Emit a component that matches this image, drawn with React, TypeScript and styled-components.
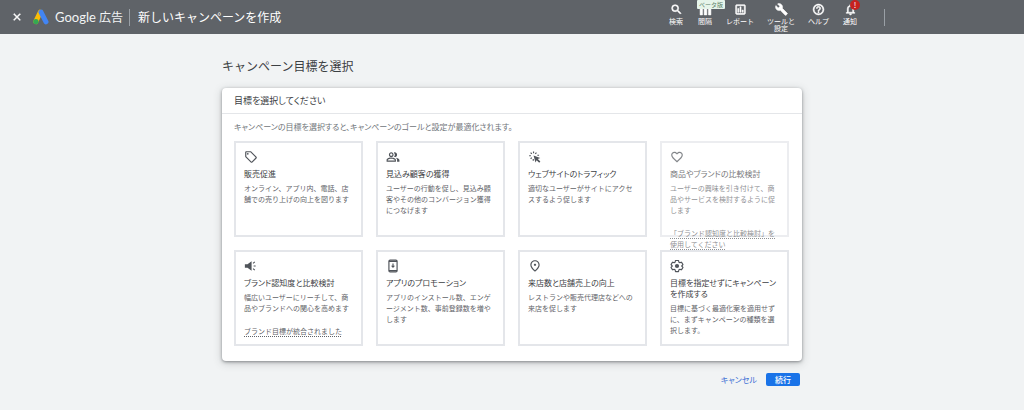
import React from "react";
import styled, { createGlobalStyle } from "styled-components";
import {
  MdBuild,
  MdClose,
  MdFavoriteBorder,
  MdHelpOutline,
  MdNotificationsNone,
  MdOutlineAssessment,
  MdOutlineLocalOffer,
  MdOutlinePeopleAlt,
  MdOutlinePlace,
  MdSearch,
} from "react-icons/md";

const GlobalStyle = createGlobalStyle`
  * { box-sizing: border-box; }
  body {
    margin: 0;
    min-height: 100vh;
    background: #f1f3f4;
    color: #3c4043;
    font-family: "Noto Sans CJK JP", "Noto Sans", sans-serif;
    font-feature-settings: "palt";
  }
  button { font: inherit; font-feature-settings: inherit; color: inherit; background: none; border: 0; padding: 0; cursor: pointer; }
  h1, h2, h3, p, ul { margin: 0; padding: 0; font-weight: 400; }
`;

const Header = styled.header`
  display: flex;
  align-items: center;
  height: 34px;
  padding: 0 139px 0 11px;
  background: #5f6368;
  color: #fff;
`;

const CloseButton = styled.button`
  display: flex;
  font-size: 12px;
  margin-right: 10px;

  svg { stroke: none; }
  path:not([fill="none"]) { stroke: currentColor; stroke-width: 1; }
`;

const Brand = styled.a`
  display: flex;
  align-items: center;
  gap: 6px;
  color: #f1f3f4;
  text-decoration: none;
  font-size: 12px;
  line-height: 18px;
`;

const BrandName = styled.span`
  font-family: Lato, "Noto Sans CJK JP", sans-serif;
  font-feature-settings: normal;

  b { font-size: 13px; font-weight: 400; }
`;

const Divider = styled.span`
  width: 1px;
  height: 17px;
  background: #9aa0a6;
`;

const PageTitle = styled.h1`
  margin-left: 8px;
  font-size: 12px;
  line-height: 18px;
  font-feature-settings: normal;
`;

const Tools = styled.nav`
  display: flex;
  align-self: stretch;
  align-items: flex-start;
  gap: 13px;
  margin: 0 26px 0 auto;
  padding-top: 3px;
`;

const Tool = styled.button`
  position: relative;
  display: flex;
  flex-direction: column;
  align-items: center;
  gap: 2px;
  min-width: 16px;
  font-size: 7px;
  font-feature-settings: normal;
  line-height: 7px;
  white-space: pre;

  svg { width: 13px; height: 13px; stroke: none; }
  path:not([fill="none"]) { stroke: currentColor; stroke-width: 1; }
`;

const BetaBadge = styled.span`
  position: absolute;
  top: -3px;
  left: 0;
  padding: 0 2px;
  border-radius: 1px;
  background: #e6f4ea;
  color: #5b8067;
  font-size: 6px;
  line-height: 9px;
`;

const AlertBadge = styled.span`
  position: absolute;
  top: -3px;
  left: 8px;
  width: 10px;
  border-radius: 5px;
  background: #c5221f;
  font-size: 8px;
  line-height: 10px;
  text-align: center;
`;

const Main = styled.main`
  max-width: 580px;
  margin: 0 auto;
  padding: 23px 0;
`;

const Heading = styled.h2`
  font-size: 12px;
  line-height: 18px;
  font-feature-settings: normal;
`;

const Panel = styled.section`
  margin-top: 13px;
  border-radius: 4px;
  background: #fff;
  box-shadow: 0 1px 3px rgba(60, 64, 67, 0.5), 0 2px 8px rgba(60, 64, 67, 0.25);
`;

const PanelTitle = styled.h3`
  padding: 0 12px;
  border-bottom: 1px solid #e4e6e9;
  font-size: 9px;
  line-height: 25px;
`;

const PanelBody = styled.div`
  padding: 7px 13px 15px 12px;
`;

const Intro = styled.p`
  margin-bottom: 8px;
  color: #70757a;
  font-size: 8px;
  line-height: 12px;
`;

const Goals = styled.ul`
  display: grid;
  grid-template-columns: repeat(4, 1fr);
  gap: 13px;
  list-style: none;
`;

const Goal = styled.li<{ $disabled?: boolean }>`
  height: 96px;
  padding: 7px 8px;
  border: 2px solid #e4e6ea;
  opacity: ${({ $disabled }) => ($disabled ? 0.7 : 1)};
`;

const GoalButton = styled.button`
  display: flex;
  flex-direction: column;
  width: 100%;
  text-align: left;

  svg { width: 14px; height: 14px; color: #50545a; }
  &:disabled { cursor: default; }
`;

const GoalName = styled.span`
  margin: 4px 0;
  color: #3c4043;
  font-size: 8px;
  line-height: 11px;
  white-space: pre;
`;

const GoalText = styled.span`
  color: #5f6368;
  font-size: 7px;
  line-height: 11px;
  white-space: pre;
  font-feature-settings: normal;
`;

const GoalNote = styled.a`
  display: inline-block;
  margin-top: 12px;
  color: #5f6368;
  font-size: 7px;
  line-height: 11px;
  white-space: pre;
  text-decoration: underline dotted 1px;
  text-underline-offset: 2px;
  font-feature-settings: normal;
`;

const Actions = styled.div`
  display: flex;
  justify-content: flex-end;
  gap: 9px;
  margin: 12px 2px 0 0;
  font-size: 8px;
  line-height: 13px;
`;

const CancelButton = styled.button`
  color: #3b6fd4;
`;

const ContinueButton = styled.button`
  width: 34px;
  border-radius: 2px;
  background: #1a73e8;
  color: #fff;
  font-weight: 500;
`;

const AdsLogo = () => (
  <svg width="16" height="16" viewBox="0 0 16 16" aria-hidden="true">
    <path d="M7.2 3.2 2.8 12.6" stroke="#fbbc04" strokeWidth="5" strokeLinecap="round" />
    <path d="M8 3.2 13 12.8" stroke="#4285f4" strokeWidth="5" strokeLinecap="round" />
    <circle cx="2.9" cy="12.6" r="2.7" fill="#34a853" />
  </svg>
);

const GapIcon = () => (
  <svg viewBox="0 0 24 24" fill="currentColor" aria-hidden="true">
    <path d="M2 2h20v20h-4.500V8h-3v14H9.500V8h-3v14H2z" />
  </svg>
);

const ClickIcon = () => (
  <svg viewBox="0 0 24 24" fill="currentColor" aria-hidden="true">
    <path d="M9.500 9.500l11.500 4-4.200 2 4.400 4.400-2 2-4.400-4.400-2 4z" />
    <path
      d="M9.500 2.500v3M4.500 4.500l2 2M14.500 4.500l-2 2M2 9.800H5M4.500 15l2-2M9 18.500v-3M16 9h3"
      fill="none"
      stroke="currentColor"
      strokeWidth="2"
    />
  </svg>
);

const SpeakerIcon = () => (
  <svg viewBox="0 0 24 24" fill="currentColor" aria-hidden="true">
    <path d="M1.500 9h4.500L13 4v16l-7-5H1.500z" />
    <path d="M15.500 7.500L18.500 5M16.500 12H20M15.500 16.500L18.500 19" stroke="currentColor" strokeWidth="2" />
  </svg>
);

const PhoneIcon = () => (
  <svg viewBox="0 0 24 24" fill="none" stroke="currentColor" strokeWidth="2" aria-hidden="true">
    <rect x="5" y="2" width="14" height="20" rx="2" />
    <path d="M5 4h14M5 20h14" />
    <path d="M12 7.500v5" />
    <path d="M8.500 11.500h7L12 15.500z" fill="currentColor" stroke="none" />
  </svg>
);

const GearIcon = () => (
  <svg viewBox="0 0 24 24" fill="none" stroke="currentColor" aria-hidden="true">
    <path
      d="M9.500 2.500h5l.8 2.900 1.600.9 2.900-.8 2.400 4.200-2.100 2.300 2.100 2.300-2.400 4.200-2.900-.8-1.600.9-.8 2.900h-5l-.8-2.900-1.600-.9-2.900.8-2.400-4.200L3.900 12 1.800 9.700l2.400-4.200 2.900.8 1.600-.9z"
      strokeWidth="2"
      strokeLinejoin="round"
    />
    <circle cx="12" cy="12" r="3.600" fill="currentColor" stroke="none" />
  </svg>
);

type GoalItem = {
  icon: React.ReactNode;
  name: string;
  text: string;
  note?: string;
  disabled?: boolean;
};

const goals: GoalItem[] = [
  { icon: <MdOutlineLocalOffer />, name: "販売促進", text: "オンライン、アプリ内、電話、店\n舗での売り上げの向上を図ります" },
  { icon: <MdOutlinePeopleAlt />, name: "見込み顧客の獲得", text: "ユーザーの行動を促し、見込み顧\n客やその他のコンバージョン獲得\nにつなげます" },
  { icon: <ClickIcon />, name: "ウェブサイトのトラフィック", text: "適切なユーザーがサイトにアクセ\nスするよう促します" },
  {
    icon: <MdFavoriteBorder />,
    name: "商品やブランドの比較検討",
    text: "ユーザーの興味を引き付けて、商\n品やサービスを検討するように促\nします",
    note: "「ブランド認知度と比較検討」を\n使用してください",
    disabled: true,
  },
  {
    icon: <SpeakerIcon />,
    name: "ブランド認知度と比較検討",
    text: "幅広いユーザーにリーチして、商\n品やブランドへの関心を高めます",
    note: "ブランド目標が統合されました",
  },
  { icon: <PhoneIcon />, name: "アプリのプロモーション", text: "アプリのインストール数、エンゲ\nージメント数、事前登録数を増や\nします" },
  { icon: <MdOutlinePlace />, name: "来店数と店舗売上の向上", text: "レストランや販売代理店などへの\n来店を促します" },
  { icon: <GearIcon />, name: "目標を指定せずにキャンペーン\nを作成する", text: "目標に基づく最適化案を適用せず\nに、まずキャンペーンの種類を選\n択します。" },
];

export default function App() {
  return (
    <>
      <GlobalStyle />
      <Header>
        <CloseButton aria-label="閉じる"><MdClose /></CloseButton>
        <Brand href="#">
          <AdsLogo />
          <BrandName><b>Google</b> 広告</BrandName>
          <Divider />
        </Brand>
        <PageTitle>新しいキャンペーンを作成</PageTitle>
        <Tools>
          <Tool><MdSearch />検索</Tool>
          <Tool><GapIcon />間隔<BetaBadge>ベータ版</BetaBadge></Tool>
          <Tool><MdOutlineAssessment />レポート</Tool>
          <Tool><MdBuild />{"ツールと\n設定"}</Tool>
          <Tool><MdHelpOutline />ヘルプ</Tool>
          <Tool><MdNotificationsNone />通知<AlertBadge>!</AlertBadge></Tool>
        </Tools>
        <Divider />
      </Header>
      <Main>
        <Heading>キャンペーン目標を選択</Heading>
        <Panel>
          <PanelTitle>目標を選択してください</PanelTitle>
          <PanelBody>
            <Intro>キャンペーンの目標を選択すると、キャンペーンのゴールと設定が最適化されます。</Intro>
            <Goals>
              {goals.map((goal) => (
                <Goal key={goal.name} $disabled={goal.disabled}>
                  <GoalButton disabled={goal.disabled}>
                    {goal.icon}
                    <GoalName>{goal.name}</GoalName>
                    <GoalText>{goal.text}</GoalText>
                  </GoalButton>
                  {goal.note && <GoalNote href="#">{goal.note}</GoalNote>}
                </Goal>
              ))}
            </Goals>
          </PanelBody>
        </Panel>
        <Actions>
          <CancelButton>キャンセル</CancelButton>
          <ContinueButton>続行</ContinueButton>
        </Actions>
      </Main>
    </>
  );
}
